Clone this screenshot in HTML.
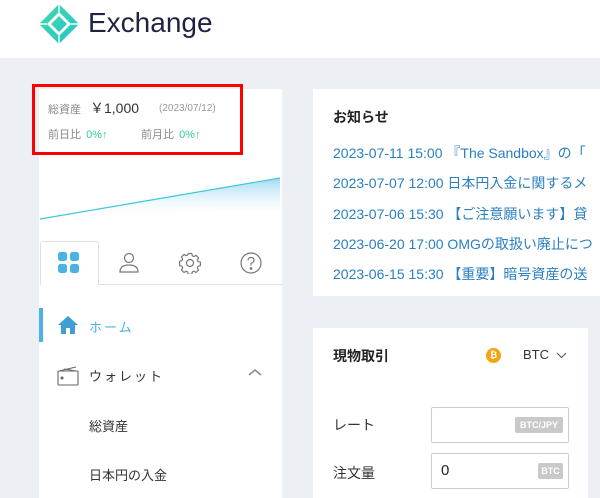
<!DOCTYPE html>
<html><head><meta charset="utf-8"><style>
*{margin:0;padding:0;box-sizing:border-box}
body{width:600px;height:498px;overflow:hidden;background:#eceff4;font-family:"Liberation Sans","Noto Sans CJK JP",sans-serif;position:relative}
.a{position:absolute;white-space:nowrap}
</style></head><body>
<div class="a" style="left:0;top:0;width:600px;height:58px;background:#fff"></div>
<svg class="a" style="left:38px;top:3px" width="42" height="42" viewBox="0 0 42 42">
<defs><linearGradient id="g" x1="0" y1="0" x2="1" y2="1"><stop offset="0" stop-color="#46d8a8"/><stop offset="1" stop-color="#1fc6c9"/></linearGradient></defs>
<path d="M21 1 L41 21 L21 41 L1 21 Z" fill="url(#g)"/>
<path d="M21 9 L33 21 L21 33 L9 21 Z" fill="#fff"/>
<path d="M21 13 L29 21 L21 29 L13 21 Z" fill="url(#g)"/>
<path d="M21 1 L21 9 M41 21 L33 21 M21 41 L21 33 M1 21 L9 21" stroke="#fff" stroke-width="1.5"/>
</svg>
<div class="a" style="left:88px;top:7px;font-size:28px;color:#1e2440">Exchange</div>

<div class="a" style="left:39px;top:89px;width:243px;height:409px;background:#fff"></div>
<svg class="a" style="left:40px;top:170px" width="242" height="60"><defs><linearGradient id="f" x1="0" y1="0" x2="0" y2="1"><stop offset="0" stop-color="#9fd8f2"/><stop offset="1" stop-color="#fff" stop-opacity="0"/></linearGradient></defs>
<path d="M0 49 L240 8 L240 40 Z" fill="url(#f)"/><path d="M0 49 L240 8" stroke="#3ec9d8" stroke-width="1.2" fill="none"/></svg>
<div class="a" style="left:32px;top:84px;width:211px;height:71px;border:3px solid #f00"></div>
<div class="a" style="left:48px;top:101px;font-size:11px;color:#888">総資産</div>
<div class="a" style="left:90px;top:98px;font-size:14px;color:#333">￥1,000</div>
<div class="a" style="left:159px;top:103px;font-size:10px;color:#999">(2023/07/12)</div>
<div class="a" style="left:48px;top:126px;font-size:11px;color:#888">前日比 <span style="color:#2ecfa0;margin-left:2px">0%↑</span></div>
<div class="a" style="left:141px;top:126px;font-size:11px;color:#888">前月比 <span style="color:#2ecfa0;margin-left:2px">0%↑</span></div>

<div class="a" style="left:40px;top:284px;width:242px;height:1px;background:#dde0e6"></div>
<div class="a" style="left:40px;top:241px;width:59px;height:44px;border:1px solid #dde0e6;border-bottom:none;border-radius:3px 3px 0 0;background:#fff"></div>
<svg class="a" style="left:58px;top:252px" width="22" height="22"><rect x="0" y="0" width="9" height="9" rx="2.5" fill="#4bb3e4"/><rect x="12" y="0" width="9" height="9" rx="2.5" fill="#4bb3e4"/><rect x="0" y="12" width="9" height="9" rx="2.5" fill="#4bb3e4"/><rect x="12" y="12" width="9" height="9" rx="2.5" fill="#4bb3e4"/></svg>
<svg class="a" style="left:119px;top:252px" width="22" height="22" fill="none" stroke="#777" stroke-width="1.2"><circle cx="10" cy="6" r="4.5"/><path d="M1 20 Q1 13 10 13 Q19 13 19 20 Z"/></svg>
<svg class="a" style="left:179px;top:252px" width="22" height="22" viewBox="0 0 22 22" fill="none" stroke="#777" stroke-width="1.2"><circle cx="11" cy="11" r="3.5"/><path d="M9.2 1.5h3.6l.5 2.3 1.7.8 2-1.3 2.6 2.6-1.3 2 .8 1.7 2.3.5v3.6l-2.3.5-.8 1.7 1.3 2-2.6 2.6-2-1.3-1.7.8-.5 2.3H9.2l-.5-2.3-1.7-.8-2 1.3-2.6-2.6 1.3-2-.8-1.7-2.3-.5V9.2l2.3-.5.8-1.7-1.3-2L5 2.4l2 1.3 1.7-.8z" stroke-linejoin="round"/></svg>
<svg class="a" style="left:240px;top:252px" width="22" height="22" fill="none" stroke="#777" stroke-width="1.2"><circle cx="11" cy="11" r="10"/><path d="M8 8.5 Q8 5.5 11 5.5 Q14 5.5 14 8.3 Q14 10 11 11.5 V13.5"/><circle cx="11" cy="16.5" r=".8" fill="#777"/></svg>

<div class="a" style="left:39px;top:308px;width:4px;height:34px;background:#4bb3e4"></div>
<svg class="a" style="left:57px;top:315px" width="22" height="20"><path d="M11 1 L21 10 H18 V19 H13 V13 H9 V19 H4 V10 H1 Z" fill="#3d9fd4"/></svg>
<div class="a" style="left:89px;top:317px;font-size:13px;color:#4bb3e4;letter-spacing:2px">ホーム</div>
<svg class="a" style="left:57px;top:365px" width="22" height="22" fill="none" stroke="#666" stroke-width="1.1"><rect x="1" y="6" width="20" height="14" rx="1"/><path d="M2 6 L19 2 M7 4 L19 6"/><circle cx="5" cy="13" r="1" fill="#666"/></svg>
<div class="a" style="left:89px;top:366px;font-size:13px;color:#333;letter-spacing:2px">ウォレット</div>
<svg class="a" style="left:248px;top:368px" width="14" height="9" fill="none" stroke="#888" stroke-width="1.5"><path d="M1 7 L7 2 L13 7"/></svg>
<div class="a" style="left:89px;top:416px;font-size:13px;color:#333">総資産</div>
<div class="a" style="left:89px;top:465px;font-size:13px;color:#333">日本円の入金</div>

<div class="a" style="left:313px;top:89px;width:287px;height:207px;background:#fff"></div>
<div class="a" style="left:333px;top:107px;font-size:14px;font-weight:bold;color:#222">お知らせ</div>
<div class="a" style="left:333px;top:138px;font-size:14px;color:#2a7fc1;line-height:30.3px">2023-07-11 15:00 『The Sandbox』の「<br>2023-07-07 12:00 日本円入金に関するメ<br>2023-07-06 15:30 【ご注意願います】貸<br>2023-06-20 17:00 OMGの取扱い廃止につ<br>2023-06-15 15:30 【重要】暗号資産の送</div>

<div class="a" style="left:313px;top:328px;width:275px;height:170px;background:#fff"></div>
<div class="a" style="left:333px;top:346px;font-size:14px;font-weight:bold;color:#222">現物取引</div>
<div class="a" style="left:486px;top:348px;width:15px;height:15px;border-radius:50%;background:#f2a50f;color:#fff;font-size:9px;font-weight:bold;text-align:center;line-height:15px">₿</div>
<div class="a" style="left:523px;top:347px;font-size:13px;color:#333">BTC</div>
<svg class="a" style="left:556px;top:352px" width="11" height="7" fill="none" stroke="#555" stroke-width="1.1"><path d="M1 1 L5.5 5.5 L10 1"/></svg>
<div class="a" style="left:333px;top:415px;font-size:14px;color:#333">レート</div>
<div class="a" style="left:431px;top:407px;width:138px;height:36px;border:1px solid #ccc;border-radius:2px"></div>
<div class="a" style="left:515px;top:417px;width:48px;height:16px;background:#c9c9c9;color:#fff;font-size:9px;font-weight:bold;text-align:center;line-height:16px;border-radius:2px">BTC/JPY</div>
<div class="a" style="left:333px;top:463px;font-size:14px;color:#333">注文量</div>
<div class="a" style="left:431px;top:453px;width:138px;height:36px;border:1px solid #ccc;border-radius:2px"></div>
<div class="a" style="left:441px;top:462px;font-size:15px;color:#222">0</div>
<div class="a" style="left:538px;top:463px;width:25px;height:16px;background:#c9c9c9;color:#fff;font-size:9px;font-weight:bold;text-align:center;line-height:16px;border-radius:2px">BTC</div>
</body></html>
